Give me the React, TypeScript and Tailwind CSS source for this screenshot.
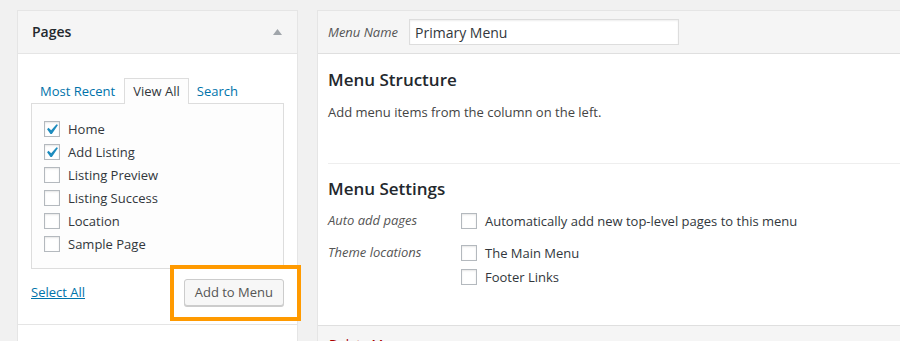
import React from "react";

function Check({ checked = false }: { checked?: boolean }) {
  return (
    <span className="relative inline-block w-[16px] h-[16px] shrink-0 border border-[#b4b9be] bg-white shadow-[inset_0_1px_2px_rgba(0,0,0,0.1)]">
      {checked && (
        <svg
          className="absolute left-[-4px] top-[-3px]"
          width="21"
          height="21"
          viewBox="0 0 20 20"
        >
          <path
            d="M14.83 4.89l1.34.94-5.81 8.38H9.02L5.78 9.67l1.34-1.25 2.57 2.4z"
            fill="#1e8cbe"
          />
        </svg>
      )}
    </span>
  );
}

const pages: { label: string; checked: boolean }[] = [
  { label: "Home", checked: true },
  { label: "Add Listing", checked: true },
  { label: "Listing Preview", checked: false },
  { label: "Listing Success", checked: false },
  { label: "Location", checked: false },
  { label: "Sample Page", checked: false },
];

export default function App() {
  return (
    <div
      className="relative w-[900px] h-[341px] overflow-hidden bg-[#f1f1f1] text-[13px] text-[#444]"
      style={{ fontFamily: '"Open Sans", "Noto Sans", sans-serif' }}
    >
      <div className="flex items-start pt-[10px] pl-[17px] gap-[19px]">
        {/* Left accordion panel */}
        <div className="w-[281px] shrink-0 border border-[#e5e5e5] bg-white">
          <div className="h-[43px] flex items-center justify-between pl-[14px] pr-[14px] bg-[#f5f5f5] border-b border-[#e5e5e5]">
            <span className="text-[14px] font-semibold text-[#23282d] leading-none">Pages</span>
            <svg width="9" height="6" viewBox="0 0 9 6" className="mr-[1px]">
              <path d="M0 6 L4.5 0 L9 6 Z" fill="#a0a5aa" />
            </svg>
          </div>
          <div className="pt-[24px] px-[13px] pb-[18px] border-b border-[#e5e5e5]">
            <div className="flex h-[25px] items-end">
              <span className="h-[25px] flex items-center pt-[2px] px-[8px] border border-transparent text-[#0073aa]">
                Most Recent
              </span>
              <span className="relative z-10 h-[26px] -mb-px flex items-center pt-[1px] px-[8px] border border-b-0 border-[#ddd] bg-[#fdfdfd] text-[#32373c]">
                View All
              </span>
              <span className="h-[25px] flex items-center pt-[2px] px-[7px] border border-transparent text-[#0073aa]">
                Search
              </span>
            </div>
            <div className="border border-[#ddd] bg-[#fdfdfd] pt-[13px] pb-[13px] pl-[12px]">
              {pages.map((p) => (
                <div key={p.label} className="h-[23px] flex items-center gap-[8px]">
                  <Check checked={p.checked} />
                  <span className="pt-[2px] text-[#32373c] leading-none">{p.label}</span>
                </div>
              ))}
            </div>
            <div className="mt-[10px] flex items-center justify-between">
              <span className="pt-[1px] text-[#0073aa] underline">Select All</span>
              <button className="h-[27px] px-[10px] rounded-[3px] border border-[#ccc] bg-[#f7f7f7] shadow-[0_1px_0_#ccc] text-[#555] text-[13px] leading-none">
                Add to Menu
              </button>
            </div>
          </div>
          <div className="h-[40px] bg-white"></div>
        </div>

        {/* Right menu editor */}
        <div className="w-[620px] shrink-0 border border-[#e5e5e5] bg-white">
          <div className="h-[43px] flex items-center pl-[10px] bg-[#f5f5f5] border-b border-[#dfdfdf]">
            <span className="w-[81px] pt-[1px] italic text-[#555]">Menu Name</span>
            <div className="w-[270px] h-[26px] flex items-center px-[5px] border border-[#ddd] bg-white shadow-[inset_0_1px_2px_rgba(0,0,0,0.07)] text-[14px] text-[#32373c]">
              Primary Menu
            </div>
          </div>
          <div className="pl-[10px] pt-[14px] pb-[36px] border-b border-[#dfdfdf]">
            <h3 className="text-[17px] leading-[24px] font-semibold text-[#23282d]">Menu Structure</h3>
            <p className="mt-[10px] leading-[20px] text-[#444]">
              Add menu items from the column on the left.
            </p>
            <div className="mt-[41px] h-px bg-[#eee]"></div>
            <h3 className="mt-[13px] text-[17px] leading-[24px] font-semibold text-[#23282d]">Menu Settings</h3>
            <div className="mt-[8px] flex h-[24px] items-center">
              <span className="w-[133px] italic text-[#555]">Auto add pages</span>
              <div className="flex items-center gap-[8px]">
                <Check />
                <span className="pt-[1px] text-[#32373c]">Automatically add new top-level pages to this menu</span>
              </div>
            </div>
            <div className="mt-[8px] flex">
              <span className="w-[133px] h-[24px] flex items-center italic text-[#555]">Theme locations</span>
              <div className="flex flex-col">
                <div className="h-[24px] flex items-center gap-[8px]">
                  <Check />
                  <span className="pt-[1px] text-[#32373c]">The Main Menu</span>
                </div>
                <div className="h-[24px] flex items-center gap-[8px]">
                  <Check />
                  <span className="pt-[1px] text-[#32373c]">Footer Links</span>
                </div>
              </div>
            </div>
          </div>
          <div className="h-[40px] bg-[#f5f5f5] pl-[11px] pt-[8px]">
            <span className="text-[#a00] leading-[20px]">Delete Menu</span>
          </div>
        </div>
      </div>

      {/* Highlight overlay */}
      <div className="absolute left-[170px] top-[265px] w-[131px] h-[56px] border-4 border-[#ff9a00]"></div>
    </div>
  );
}
